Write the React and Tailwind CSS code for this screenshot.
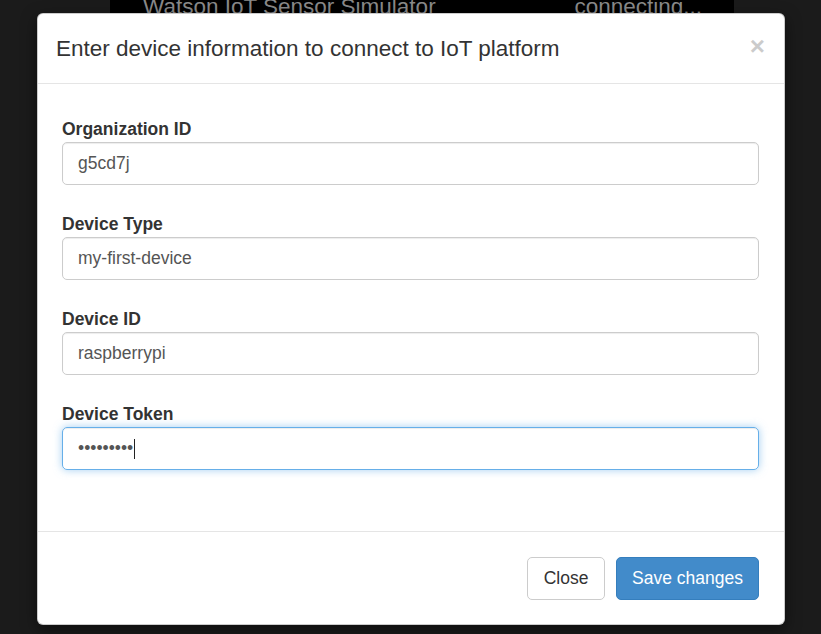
import React from 'react';

const fields = [
  { id: 'org', label: 'Organization ID', value: 'g5cd7j' },
  { id: 'type', label: 'Device Type', value: 'my-first-device' },
  { id: 'devid', label: 'Device ID', value: 'raspberrypi' },
];

export default function App() {
  return (
    <div className="relative h-[634px] w-full overflow-hidden bg-[#1b1b1b] font-['Liberation_Sans',Arial,sans-serif]">
      {/* page behind the backdrop */}
      <div className="ml-[110px] flex h-[60px] w-[624px] items-start bg-black pl-[33px] pr-[32px] text-[#8a8a8a]">
        <div className="-mt-[8px] flex w-full justify-between text-[22.5px] leading-[30px]">
          <span>Watson IoT Sensor Simulator</span>
          <span>connecting...</span>
        </div>
      </div>

      {/* modal */}
      <div className="absolute left-[37px] top-[13px] w-[748px] rounded-[6px] border border-black/20 bg-white shadow-[0_5px_15px_rgba(0,0,0,0.5)]">
        <div className="flex h-[70px] items-center justify-between border-b border-[#e5e5e5] pl-[18px] pr-[19px]">
          <h4 className="text-[22.5px] leading-[32px] text-[#333]">
            Enter device information to connect to IoT platform
          </h4>
          <button className="-mt-[6px] text-[26px] font-bold leading-none text-black opacity-20">
            ×
          </button>
        </div>

        <div className="pb-[61px] pl-[24px] pr-[25px] pt-[33px]">
          {fields.map((f) => (
            <div key={f.id} className="mb-[27px]">
              <label htmlFor={f.id} className="block text-[17.5px] font-bold leading-[25px] text-[#333]">
                {f.label}
              </label>
              <input
                id={f.id}
                readOnly
                defaultValue={f.value}
                className="block h-[43px] w-full rounded-[5px] border border-[#ccc] px-[15px] text-[17.5px] text-[#555] shadow-[inset_0_1px_1px_rgba(0,0,0,0.075)] outline-none"
              />
            </div>
          ))}
          <div>
            <label className="block text-[17.5px] font-bold leading-[25px] text-[#333]">Device Token</label>
            <div className="flex h-[43px] w-full items-center rounded-[5px] border border-[#66afe9] px-[15px] text-[17.5px] text-[#555] shadow-[inset_0_1px_1px_rgba(0,0,0,0.075),0_0_8px_rgba(102,175,233,0.6)]">
              <span>•••••••••</span>
              <span className="ml-[1px] h-[20px] w-px bg-[#222]" />
            </div>
          </div>
        </div>

        <div className="flex justify-end gap-[11px] border-t border-[#e5e5e5] pb-[24px] pr-[25px] pt-[25px]">
          <button className="h-[43px] w-[78px] rounded-[5px] border border-[#ccc] bg-white text-[17.5px] text-[#333]">
            Close
          </button>
          <button className="h-[43px] rounded-[5px] border border-[#357ebd] bg-[#428bca] px-[15px] text-[17.5px] text-white">
            Save changes
          </button>
        </div>
      </div>
    </div>
  );
}
